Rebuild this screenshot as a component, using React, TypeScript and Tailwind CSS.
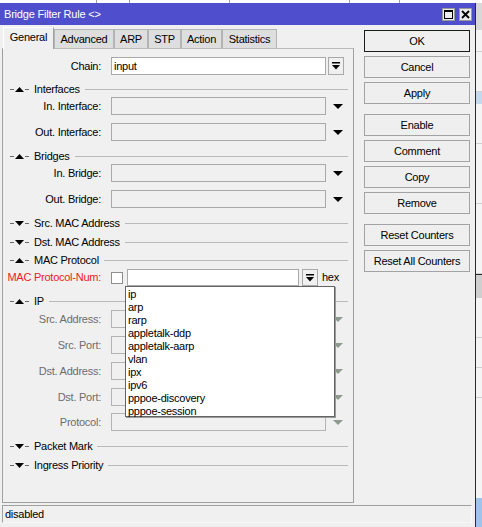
import React from "react";

const TABS = [
  { label: "General", w: "w-[51px]", active: true },
  { label: "Advanced", w: "w-[60px]" },
  { label: "ARP", w: "w-[34px]" },
  { label: "STP", w: "w-[33px]" },
  { label: "Action", w: "w-[41px]" },
  { label: "Statistics", w: "w-[55px]" },
];

const PROTOCOLS = [
  "ip",
  "arp",
  "rarp",
  "appletalk-ddp",
  "appletalk-aarp",
  "vlan",
  "ipx",
  "ipv6",
  "pppoe-discovery",
  "pppoe-session",
];

function Tri({ up, color = "#000" }: { up?: boolean; color?: string }) {
  return (
    <svg width="9" height="5" viewBox="0 0 9 5" className="shrink-0">
      <polygon points={up ? "0,5 9,5 4.5,0" : "0,0 9,0 4.5,5"} fill={color} />
    </svg>
  );
}

function DropArrow({ color = "#000" }: { color?: string }) {
  return (
    <svg width="10" height="5" viewBox="0 0 10 5" className="ml-[7px] shrink-0">
      <polygon points="0,0 10,0 5,5" fill={color} />
    </svg>
  );
}

function BarArrow() {
  return (
    <svg width="8" height="8" viewBox="0 0 8 8">
      <rect x="0" y="0" width="8" height="1.5" fill="#000" />
      <polygon points="0,3 8,3 4,7.5" fill="#000" />
    </svg>
  );
}

function Section({ title, open, mt }: { title: string; open?: boolean; mt: string }) {
  return (
    <div className={`flex h-[14px] items-center ${mt}`}>
      <div className="ml-[7px] h-px w-[4px] bg-[#6a6a6a]" />
      <div className="ml-px">
        <Tri up={open} />
      </div>
      <div className="ml-px h-px w-[4px] bg-[#6a6a6a]" />
      <span className="ml-[5px] text-black">{title}</span>
      <div className="ml-[5px] mr-[5px] h-px flex-1 bg-[#b9b9b9]" />
    </div>
  );
}

function Field({
  label,
  mt,
  disabled,
  arrow,
}: {
  label: string;
  mt: string;
  disabled?: boolean;
  arrow?: boolean;
}) {
  return (
    <div className={`flex h-[18px] items-center ${mt}`}>
      <div className={`w-[99px] pr-px text-right ${disabled ? "text-[#6d6d6d]" : "text-black"}`}>{label}</div>
      <div className={`ml-[9px] h-[18px] w-[215px] border bg-[#f0f0f0] ${disabled ? "border-[#b4b4b4]" : "border-[#a9a9a9]"}`} />
      {arrow && <DropArrow color={disabled ? "#8e9a8e" : "#000"} />}
    </div>
  );
}

function Btn({ label, mt, def }: { label: string; mt: string; def?: boolean }) {
  return (
    <div
      className={`flex h-[22px] w-[106px] items-center justify-center border bg-[#efefef] text-black ${mt} ${
        def ? "border-[#1b1b1b]" : "border-[#a3a3a3]"
      }`}
    >
      {label}
    </div>
  );
}

export default function App() {
  return (
    <div className="flex h-[527px] w-[482px] flex-col overflow-hidden bg-white font-['Liberation_Sans',Arial,sans-serif] text-[11px] leading-none tracking-[-0.25px] text-black">
      {/* strip of the app behind the window */}
      <div className="flex h-[3px] shrink-0">
        <div className="w-[97px] border-r border-[#a0a0a0]" />
        <div className="w-[33px] border-r border-[#a0a0a0]" />
        <div className="w-[100px] border-r border-[#a0a0a0]" />
        <div className="w-[120px] border-r border-[#a0a0a0]" />
        <div className="w-[50px] border-r border-[#a0a0a0]" />
        <div className="flex-1" />
      </div>

      <div className="flex flex-1">
        {/* window */}
        <div className="flex w-[475px] flex-col bg-[#f0f0f0]">
          <div className="flex h-[22px] shrink-0 items-center bg-[#4f4fcd]">
            <span className="pl-[4px] text-[11px] tracking-[-0.2px] text-white">Bridge Filter Rule &lt;&gt;</span>
            <div className="ml-auto flex h-[13px] w-[13px] items-center justify-center border border-[#9a9a9a] bg-[#ececec]">
              <div className="h-[9px] w-[9px] border border-t-2 border-black" />
            </div>
            <div className="ml-[4px] mr-[3px] flex h-[13px] w-[13px] items-center justify-center border border-[#9a9a9a] bg-[#ececec]">
              <svg width="9" height="9" viewBox="0 0 9 9">
                <path d="M1 1 L8 8 M8 1 L1 8" stroke="#000" strokeWidth="1.8" />
              </svg>
            </div>
          </div>

          <div className="flex">
            {/* left: tabs + panel */}
            <div className="ml-[2px] flex w-[352px] flex-col">
              <div className="ml-px mt-[2px] flex h-[21px] items-end">
                {TABS.map((t) =>
                  t.active ? (
                    <div
                      key={t.label}
                      className={`relative z-10 -mb-px flex h-[22px] items-center justify-center border border-b-0 border-l-white border-t-white border-r-[#a0a0a0] bg-[#f0f0f0] pb-[3px] ${t.w}`}
                    >
                      {t.label}
                    </div>
                  ) : (
                    <div
                      key={t.label}
                      className={`flex h-[19px] items-center justify-center border border-b-0 border-[#b4b4b4] bg-[#dedede] ${t.w}`}
                    >
                      {t.label}
                    </div>
                  )
                )}
              </div>

              <div className="flex h-[455px] flex-col border border-[#a0a0a0] border-t-[#b9b9b9]">
                <div className="mt-[8px] flex h-[18px] items-center">
                  <div className="w-[99px] pr-px text-right">Chain:</div>
                  <div className="ml-[9px] flex h-[18px] w-[215px] items-center border border-[#a9a9a9] bg-white pl-[2px]">
                    input
                  </div>
                  <div className="ml-[2px] flex h-[18px] w-[16px] items-center justify-center border border-[#a9a9a9] bg-[#f0f0f0]">
                    <BarArrow />
                  </div>
                </div>

                <Section title="Interfaces" open mt="mt-[7px]" />
                <Field label="In. Interface:" mt="mt-px" arrow />
                <Field label="Out. Interface:" mt="mt-[8px]" arrow />

                <Section title="Bridges" open mt="mt-[8px]" />
                <Field label="In. Bridge:" mt="mt-px" arrow />
                <Field label="Out. Bridge:" mt="mt-[8px]" arrow />

                <Section title="Src. MAC Address" mt="mt-[8px]" />
                <Section title="Dst. MAC Address" mt="mt-[5px]" />
                <Section title="MAC Protocol" open mt="mt-[4px]" />

                <div className="relative z-20 mt-[2px] flex h-[17px] items-center">
                  <div className="w-[99px] pr-px text-right text-[#f01a1a]">MAC Protocol-Num:</div>
                  <div className="ml-[9px] h-[12px] w-[12px] border border-[#8f8f8f] bg-white" />
                  <div className="relative ml-[4px] h-[17px] w-[172px] border border-[#a9a9a9] bg-white">
                    <div className="absolute left-[-3px] top-[16px] h-[131px] w-[210px] border border-[#646464] bg-white shadow-[1px_1px_0_#9a9a9a]">
                      {PROTOCOLS.map((p) => (
                        <div key={p} className="h-[13px] pl-[2px] pt-px leading-[13px]">
                          {p}
                        </div>
                      ))}
                    </div>
                  </div>
                  <div className="ml-[3px] flex h-[17px] w-[16px] items-center justify-center border border-[#a9a9a9] bg-[#f0f0f0]">
                    <BarArrow />
                  </div>
                  <span className="ml-[4px]">hex</span>
                </div>

                <Section title="IP" open mt="mt-[8px]" />
                <Field label="Src. Address:" mt="mt-[2px]" disabled arrow />
                <Field label="Src. Port:" mt="mt-[8px]" disabled arrow />
                <Field label="Dst. Address:" mt="mt-[8px]" disabled arrow />
                <Field label="Dst. Port:" mt="mt-[8px]" disabled arrow />
                <Field label="Protocol:" mt="mt-[7px]" disabled arrow />

                <Section title="Packet Mark" mt="mt-[8px]" />
                <Section title="Ingress Priority" mt="mt-[5px]" />
              </div>
            </div>

            {/* right: buttons */}
            <div className="ml-[10px] flex flex-col pt-[5px]">
              <Btn label="OK" mt="mt-0" def />
              <Btn label="Cancel" mt="mt-[4px]" />
              <Btn label="Apply" mt="mt-[4px]" />
              <Btn label="Enable" mt="mt-[10px]" />
              <Btn label="Comment" mt="mt-[4px]" />
              <Btn label="Copy" mt="mt-[4px]" />
              <Btn label="Remove" mt="mt-[4px]" />
              <Btn label="Reset Counters" mt="mt-[10px]" />
              <Btn label="Reset All Counters" mt="mt-[4px]" />
            </div>
          </div>

          <div className="ml-[2px] mt-[2px] flex h-[18px] w-[470px] items-center border border-[#a0a0a0] border-b-[#f8f8f8] border-r-[#f8f8f8] pl-[2px]">
            disabled
          </div>
        </div>

        {/* edge of the app behind */}
        <div className="flex w-[7px] flex-col border-l border-[#2b2b2b] bg-[#f4f4f4]">
          <div className="h-[27px] bg-[#d8d8d8]" />
          <div className="h-[22px] border-b border-[#cfcfcf]" />
          <div className="h-[40px] border-b border-[#cfcfcf]" />
          <div className="h-[12px] bg-[#c4d8ee]" />
          <div className="h-[40px] border-b border-[#cfcfcf]" />
          <div className="h-[60px] border-b border-[#cfcfcf]" />
          <div className="h-[70px] border-b border-[#cfcfcf]" />
          <div className="h-[24px] border-t border-[#2b2b2b] bg-[#cfcfcf]" />
          <div className="h-[40px] border-b border-[#cfcfcf]" />
          <div className="h-[30px] border-b border-[#cfcfcf]" />
          <div className="h-[30px] border-b border-[#cfcfcf]" />
          <div className="h-[100px]" />
          <div className="flex-1 bg-[#9fc3ea]" />
        </div>
      </div>
    </div>
  );
}
